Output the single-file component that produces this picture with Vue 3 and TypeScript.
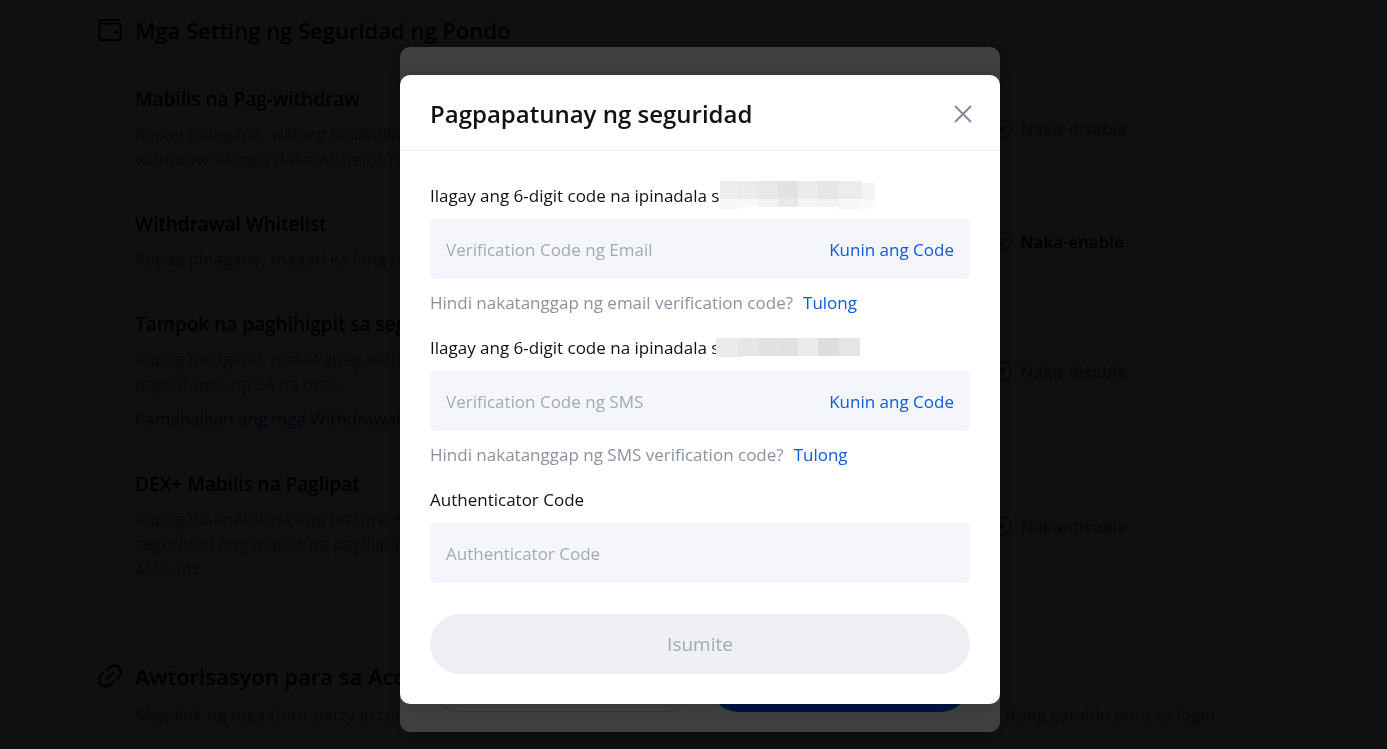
<script setup lang="ts">
import { ref } from 'vue'

interface Setting {
  title: string
  lines: string[]
  link?: string
  enabled: boolean
}

interface Cell {
  x: number
  y: number
  w: number
  h: number
  fill: string
}

interface Field {
  id: string
  label: string
  placeholder: string
  help?: string
  mask?: Cell[]
}

const settings: Setting[] = [
  { title: 'Mabilis na Pag-withdraw', lines: ['Kapag pinagana, walang kinakailangan', 'withdraw sa mga naka-whitelist na'], enabled: false },
  { title: 'Withdrawal Whitelist', lines: ['Kapag pinagana, maaari ka lang mag'], enabled: true },
  {
    title: 'Tampok na paghihigpit sa seguridad',
    lines: ['Kapag pinagana, makakapag-withdraw', 'pagkatapos ng 24 na oras.'],
    link: 'Pamahalaan ang mga Withdrawal Address',
    enabled: false,
  },
  { title: 'DEX+ Mabilis na Paglipat', lines: ['Kapag na-enable na ang feature na ito', 'seguridad ang maliliit na paglilipat sa', 'account.'], enabled: false },
]

const row = (y: number, h: number, cells: [number, number, string][]): Cell[] =>
  cells.map(([x, w, fill]) => ({ x, y, w, h, fill }))

const emailMask: Cell[] = [
  ...row(0, 18, [[4, 18, '#ededed'], [22, 20, '#ebebeb'], [42, 20, '#e8e8e8'], [62, 20, '#e2e2e2'], [82, 20, '#ebebeb'], [102, 20, '#e6e6e6'], [122, 24, '#ececec']]),
  ...row(2, 17, [[146, 13, '#f3f3f3']]),
  ...row(18, 10, [[4, 18, '#f7f7f7']]),
  ...row(18, 8, [[22, 20, '#f8f8f8'], [42, 20, '#f3f3f3'], [62, 20, '#e9e9e9'], [82, 20, '#f5f5f5'], [102, 20, '#f3f3f3']]),
  ...row(19, 9, [[122, 22, '#f6f6f6'], [144, 15, '#fafafa']]),
]

const smsMask: Cell[] = [
  ...row(5, 19, [[0, 26, '#ebebeb']]),
  ...row(5, 18, [[22, 20, '#e6e6e6'], [42, 20, '#e2e2e2'], [62, 20, '#e1e1e1'], [82, 20, '#ebebeb'], [102, 21, '#dddddd'], [123, 21, '#e6e6e6']]),
]

const fields: Field[] = [
  { id: 'email-code', label: 'Ilagay ang 6-digit code na ipinadala sa', placeholder: 'Verification Code ng Email', help: 'Hindi nakatanggap ng email verification code?', mask: emailMask },
  { id: 'sms-code', label: 'Ilagay ang 6-digit code na ipinadala sa', placeholder: 'Verification Code ng SMS', help: 'Hindi nakatanggap ng SMS verification code?', mask: smsMask },
  { id: 'auth-code', label: 'Authenticator Code', placeholder: 'Authenticator Code' },
]

const codes = ref<Record<string, string>>({ 'email-code': '', 'sms-code': '', 'auth-code': '' })
</script>

<template>
  <div class="screen">
    <main class="page">
      <section class="section">
        <svg class="section-icon" viewBox="0 0 24 24" fill="none" stroke="#000" stroke-width="2">
          <path d="M21.500 2H3.500A2 2 0 0 0 1.500 4V21a1 1 0 0 0 1 1h19a1 1 0 0 0 1-1V6.500a1 1 0 0 0-1-1H1.500" />
          <circle cx="18" cy="14" r="2" fill="#000" stroke="none" />
        </svg>
        <div class="section-body">
          <h2>Mga Setting ng Seguridad ng Pondo</h2>
          <div class="rows">
            <div v-for="s in settings" :key="s.title" class="row">
              <div class="row-text">
                <h3>{{ s.title }}</h3>
                <p><span v-for="line in s.lines" :key="line" class="line">{{ line }}</span></p>
                <a v-if="s.link" href="#" class="row-link">{{ s.link }}</a>
              </div>
              <div class="status" :class="{ on: s.enabled }">
                <svg viewBox="0 0 20 20" fill="none" stroke-width="2">
                  <circle cx="10" cy="10" r="9" />
                  <path v-if="s.enabled" d="M5.500 10l3 3.500 5.500-6.500" />
                  <path v-else d="M7 7l6 6M13 7l-6 6" />
                </svg>
                <span>{{ s.enabled ? 'Naka-enable' : 'Naka-disable' }}</span>
              </div>
            </div>
          </div>
        </div>
      </section>
      <section class="section linked">
        <svg class="section-icon" viewBox="0 0 24 24" fill="none" stroke="#000" stroke-width="2.500">
          <g transform="translate(12 12) rotate(-42)">
            <path d="M-5.500 0H5.500" />
            <path d="M-2.500-6.500H-6a6.500 6.500 0 0 0 0 13H0" />
            <path d="M0-6.500H6a6.500 6.500 0 0 1 0 13H2.500" />
          </g>
        </svg>
        <div class="section-body">
          <h2>Awtorisasyon para sa Account</h2>
          <p class="split"><span>Mag-link ng mga third-party account</span><span>mo itong gamitin para sa login.</span></p>
        </div>
      </section>
    </main>

    <div class="overlay">
      <div class="dialog under">
        <button type="button" class="pill outline" aria-label="Kanselahin"></button>
        <button type="button" class="pill solid" aria-label="Kumpirmahin"></button>
      </div>
    </div>

    <div class="overlay">
      <form class="dialog" role="dialog" aria-labelledby="dialog-title" @submit.prevent>
        <header>
          <h1 id="dialog-title">Pagpapatunay ng seguridad</h1>
          <button type="button" class="close" aria-label="Isara">
            <svg viewBox="0 0 18 18" fill="none" stroke="#818a9c" stroke-width="2"><path d="M1 1l16 16M17 1L1 17" /></svg>
          </button>
        </header>
        <div class="body">
          <div v-for="f in fields" :key="f.id" class="field">
            <div class="label-line">
              <label :for="f.id">{{ f.label }}</label>
              <svg v-if="f.mask" class="mask" viewBox="0 0 160 28" shape-rendering="crispEdges">
                <rect v-for="(c, i) in f.mask" :key="i" :x="c.x" :y="c.y" :width="c.w" :height="c.h" :fill="c.fill" />
              </svg>
            </div>
            <div class="box">
              <input :id="f.id" v-model="codes[f.id]" type="text" :placeholder="f.placeholder" />
              <button v-if="f.help" type="button" class="get">Kunin ang Code</button>
            </div>
            <p v-if="f.help" class="help">{{ f.help }}<a href="#">Tulong</a></p>
          </div>
          <button type="submit" class="submit" disabled>Isumite</button>
        </div>
      </form>
    </div>
  </div>
</template>

<style>
body {
  margin: 0;
  background: #fff;
}
</style>

<style scoped>
.screen {
  height: 100vh;
  overflow: hidden;
  font-family: "Open Sans", "Noto Sans", sans-serif;
  font-size: 17px;
  line-height: 25px;
  color: #000;
}
h1, h2, h3, p {
  margin: 0;
}
h1, h2, h3 {
  font-weight: 600;
}
a {
  color: #0052d9;
  text-decoration: none;
}
button {
  border: 0;
  padding: 0;
  background: none;
  font: inherit;
  cursor: pointer;
}
.page {
  padding: 16px 98px 0;
}
.section {
  display: flex;
  gap: 13px;
}
.section-icon {
  width: 24px;
  height: 24px;
  margin-top: 2px;
  flex: none;
}
.section-body {
  flex: 1;
}
h2 {
  font-size: 22px;
  line-height: 28px;
}
h3 {
  font-size: 19px;
  line-height: 27px;
}
.rows {
  display: flex;
  flex-direction: column;
  gap: 40px;
  margin-top: 42px;
}
.row {
  display: grid;
  grid-template-columns: 857px 1fr;
  align-items: center;
}
.row p {
  margin-top: 8px;
  color: #81858c;
}
.line {
  display: block;
  white-space: nowrap;
}
.row-link {
  display: inline-block;
  margin-top: 10px;
}
.status {
  display: flex;
  align-items: center;
  gap: 8px;
  font-weight: 600;
  color: #81858c;
}
.status svg {
  width: 20px;
  height: 20px;
  stroke: #70747c;
}
.status.on {
  color: #000;
}
.status.on svg {
  stroke: #00b070;
}
.linked {
  margin-top: 40px;
  padding-top: 40px;
  border-top: 1px solid #e6e6e6;
}
.split {
  display: flex;
  justify-content: space-between;
  max-width: 1085px;
  margin-top: 12px;
  color: #81858c;
}
.overlay {
  position: fixed;
  inset: 0;
  display: flex;
  align-items: center;
  justify-content: center;
  padding: 30px 0 0 13px;
  box-sizing: border-box;
  background: rgba(0, 0, 0, 0.75);
}
.dialog {
  width: 600px;
  border-radius: 10px;
  background: #fff;
  box-shadow: 0 0 20px rgba(0, 0, 0, 0.2);
}
.under {
  display: flex;
  align-items: flex-end;
  gap: 15px;
  height: 685px;
  padding: 0 30px 20px;
  box-sizing: border-box;
}
.pill {
  flex: 1;
  height: 60px;
  border-radius: 30px;
}
.outline {
  border: 1px solid #d0d3d9;
}
.solid {
  background: #0052ff;
}
header {
  display: flex;
  align-items: center;
  justify-content: space-between;
  height: 73px;
  padding: 2px 28px 0 30px;
  border-bottom: 1px solid #efefef;
}
h1 {
  font-size: 24px;
  line-height: 35px;
  color: #111;
}
.close {
  display: flex;
}
.close svg {
  width: 18px;
  height: 18px;
}
.body {
  padding: 32px 30px 30px;
}
.field + .field {
  margin-top: 20px;
}
.label-line {
  position: relative;
  color: #111;
}
.label-line label {
  display: block;
}
.mask {
  position: absolute;
  left: 286px;
  top: -2px;
  width: 160px;
  height: 28px;
}
.box {
  display: flex;
  align-items: center;
  height: 60px;
  margin: 11px 0;
  padding: 0 16px;
  border-radius: 5px;
  background: #f4f6fb;
}
.box input {
  flex: 1;
  min-width: 0;
  height: 40px;
  padding: 0;
  border: 0;
  outline: 0;
  background: transparent;
  font: inherit;
  color: #111;
}
.box input::placeholder {
  color: #a3a9b6;
  opacity: 1;
}
.get {
  color: #0d5bdd;
}
.help {
  color: #8b92a0;
}
.help a {
  margin-left: 10px;
  color: #0d5bdd;
}
.submit {
  display: block;
  width: 100%;
  height: 60px;
  margin-top: 31px;
  border-radius: 30px;
  background: #eff0f5;
  color: #a3a9b6;
  font-size: 19px;
}
</style>
